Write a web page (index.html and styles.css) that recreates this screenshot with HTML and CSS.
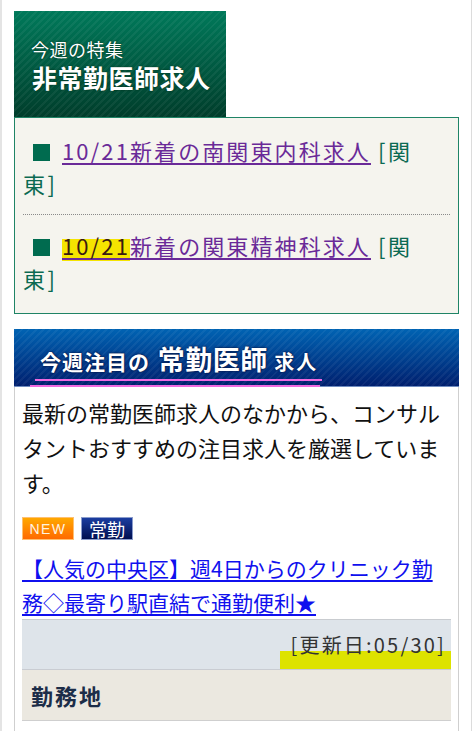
FILE: index.html
```html
<!DOCTYPE html>
<html lang="ja">
<head>
<meta charset="utf-8">
<link rel="stylesheet" href="styles.css">
</head>
<body>
<div class="page">
  <section class="feature">
    <div class="feature-head">
      <div class="feature-sub">今週の特集</div>
      <div class="feature-title">非常勤医師求人</div>
    </div>
    <ul class="feature-list">
      <li class="feature-item"><span class="sq"></span><a href="#" class="visited">10/21新着の南関東内科求人</a> <span class="area">[関東]</span></li>
      <li class="feature-item"><span class="sq"></span><a href="#" class="visited"><span class="hl">10/21</span>新着の関東精神科求人</a> <span class="area">[関東]</span></li>
    </ul>
  </section>

  <section class="pickup">
    <div class="pickup-head">
      <span class="pickup-title"><span class="pt-s">今週注目の</span> <span class="pt-l">常勤医師</span> <span class="pt-xs">求人</span></span>
    </div>
    <div class="pickup-body">
      <p class="pickup-desc">最新の常勤医師求人のなかから、コンサルタントおすすめの注目求人を厳選しています。</p>
      <div class="badges"><span class="badge badge-new">NEW</span><span class="badge badge-full">常勤</span></div>
      <a href="#" class="job-link">【人気の中央区】週4日からのクリニック勤務◇最寄り駅直結で通勤便利★</a>
      <div class="updated"><span class="updated-text">[更新日:05/30]</span></div>
      <div class="row-label">勤務地</div>
    </div>
  </section>
</div>
</body>
</html>
```
FILE: styles.css
```css
html, body {
  margin: 0;
  padding: 0;
  background: #fff;
}
body {
  font-family: "Noto Sans CJK JP", "Noto Sans", sans-serif;
  color: #111;
}
.page {
  border-left: 2px solid #e4e4e4;
  border-right: 1px solid #dcdcdc;
  padding: 11px 12px 0 12px;
  min-height: 731px;
  box-sizing: border-box;
}

/* feature */
.feature-head {
  width: 212px;
  height: 106px;
  box-sizing: border-box;
  padding: 25px 0 0 17px;
  color: #fff;
  background:
    repeating-linear-gradient(135deg, rgba(255,255,255,0.05) 0 2px, rgba(0,0,0,0) 2px 5px),
    linear-gradient(#00795a, #003d2b);
  text-shadow: 0 0 2px rgba(0,40,20,0.9);
}
.feature-sub {
  font-size: 18px;
  line-height: 26px;
  letter-spacing: 0.5px;
}
.feature-title {
  font-size: 25px;
  line-height: 30px;
  font-weight: bold;
  letter-spacing: 0.5px;
  margin-left: 1px;
}
.feature-list {
  list-style: none;
  margin: 0;
  padding: 2px 8px 4px 8px;
  border: 1px solid #1f8466;
  background: #f5f4ee;
}
.feature-item {
  padding: 14px 0;
  font-size: 22px;
  line-height: 33px;
  letter-spacing: 2.1px;
  color: #0b6a52;
}
.feature-item + .feature-item {
  border-top: 1px dotted #8a8a8a;
}
.sq {
  display: inline-block;
  width: 17px;
  height: 17px;
  background: #006b4f;
  margin: 0 12px 0 10px;
  vertical-align: -1px;
}
.visited {
  color: #6a2a98;
  text-decoration: underline;
  text-underline-offset: 3px;
}
.hl {
  color: #3a1a10;
  background: linear-gradient(rgba(0,0,0,0) 32%, #f5e400 32%);
}
.area {
  letter-spacing: 2.5px;
  padding-right: 12px;
}

/* pickup */
.pickup {
  margin-top: 15px;
}
.pickup-head {
  height: 58px;
  box-sizing: border-box;
  padding: 15px 0 0 16px;
  background:
    repeating-linear-gradient(135deg, rgba(255,255,255,0.05) 0 2px, rgba(0,0,0,0) 2px 5px),
    linear-gradient(#0063b3, #001f6e);
  border-bottom: 1px solid #6f8cc0;
}
.pickup-title {
  display: inline-block;
  color: #fff;
  font-weight: bold;
  line-height: 30px;
  padding: 0 4px 9px 10px;
  text-shadow: 0 0 3px #001040, 0 0 1px #001040;
  background:
    linear-gradient(#f06ae0, #f06ae0) left 5px bottom 6px / calc(100% - 5px) 2px no-repeat,
    linear-gradient(#f06ae0, #f06ae0) left 0 bottom 0 / calc(100% - 2px) 2px no-repeat;
}
.pt-s { font-size: 21px; letter-spacing: 1px; }
.pt-l { font-size: 27px; letter-spacing: 0.5px; margin-left: 4px; }
.pt-xs { font-size: 20px; letter-spacing: 2px; margin-left: 3px; }

.pickup-body {
  border: 1px solid #cfcfcf;
  border-top: 0;
  padding: 8px 7px 0 7px;
  min-height: 420px;
}
.pickup-desc {
  margin: 0;
  font-size: 22px;
  line-height: 35px;
  color: #111;
}
.badges {
  display: flex;
  gap: 7px;
  margin-top: 17px;
}
.badge {
  display: inline-flex;
  align-items: center;
  justify-content: center;
  height: 23px;
  box-sizing: border-box;
  color: #fff;
}
.badge-new {
  width: 52px;
  font-family: "Liberation Sans", Arial, sans-serif;
  font-size: 14px;
  letter-spacing: 1.5px;
  background: linear-gradient(#ffa800, #ff6a00);
  border: 1px solid #ffc070;
  color: #fff4e0;
}
.badge-full {
  width: 52px;
  font-size: 18px;
  background: linear-gradient(#1b3da0, #000f50);
  border: 1px solid #8a9ccc;
}
.job-link {
  display: block;
  margin-top: 11px;
  font-size: 21px;
  line-height: 34px;
  color: #1010ee;
  text-decoration: underline;
  text-underline-offset: 3px;
}
.updated {
  background: #dee4ea;
  border-top: 1px solid #c9ccd0;
  height: 50px;
  box-sizing: border-box;
  display: flex;
  justify-content: flex-end;
  align-items: flex-end;
}
.updated-text {
  font-size: 20px;
  line-height: 24px;
  letter-spacing: 2.2px;
  color: #333;
  padding: 0 5px 12px 10px;
  background: linear-gradient(rgba(0,0,0,0) 50%, #dde300 50%);
}
.row-label {
  background: #ebe8e0;
  border-top: 1px solid #c9ccd2;
  border-bottom: 1px solid #cfcfcf;
  height: 52px;
  box-sizing: border-box;
  padding-left: 9px;
  display: flex;
  align-items: center;
  font-size: 22px;
  font-weight: bold;
  color: #1c2d48;
  letter-spacing: 2px;
}
```
